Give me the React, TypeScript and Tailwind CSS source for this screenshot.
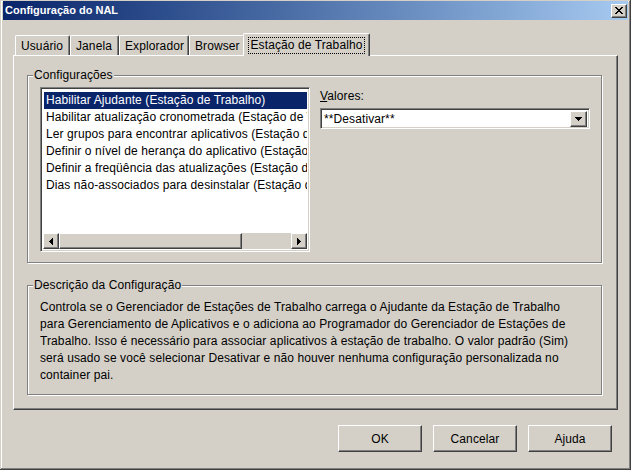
import React from 'react';

const raised =
  'border border-t-white border-l-white border-r-[#404040] border-b-[#404040] shadow-[inset_-1px_-1px_0_#808080]';
const sunken =
  'border border-t-[#808080] border-l-[#808080] border-r-white border-b-white shadow-[inset_1px_1px_0_#404040,inset_-1px_-1px_0_#d4d0c8]';
const etched = 'border border-[#808080] shadow-[inset_1px_1px_0_#fff,1px_1px_0_#fff]';

const items = [
  'Habilitar Ajudante (Estação de Trabalho)',
  'Habilitar atualização cronometrada (Estação de Trabalho)',
  'Ler grupos para encontrar aplicativos (Estação de Trabalho)',
  'Definir o nível de herança do aplicativo (Estação de Trabalho)',
  'Definir a freqüência das atualizações (Estação de Trabalho)',
  'Dias não-associados para desinstalar (Estação de Trabalho)',
];

function CloseGlyph() {
  // 8x7 pixel X, classic window style
  const px = [
    [0, 0], [1, 0], [6, 0], [7, 0],
    [1, 1], [2, 1], [5, 1], [6, 1],
    [2, 2], [3, 2], [4, 2], [5, 2],
    [3, 3], [4, 3],
    [2, 4], [3, 4], [4, 4], [5, 4],
    [1, 5], [2, 5], [5, 5], [6, 5],
    [0, 6], [1, 6], [6, 6], [7, 6],
  ];
  return (
    <svg width="8" height="7" viewBox="0 0 8 7" shapeRendering="crispEdges">
      {px.map(([x, y]) => (
        <rect key={`${x}-${y}`} x={x} y={y} width="1" height="1" fill="#000" />
      ))}
    </svg>
  );
}

function Arrow({ dir }: { dir: 'left' | 'right' | 'down' }) {
  if (dir === 'down')
    return (
      <svg width="7" height="4" viewBox="0 0 7 4" shapeRendering="crispEdges">
        <path d="M0 0h7v1H0zM1 1h5v1H1zM2 2h3v1H2zM3 3h1v1H3z" fill="#000" />
      </svg>
    );
  if (dir === 'left')
    return (
      <svg width="4" height="7" viewBox="0 0 4 7" shapeRendering="crispEdges">
        <path d="M3 0h1v7H3zM2 1h1v5H2zM1 2h1v3H1zM0 3h1v1H0z" fill="#000" />
      </svg>
    );
  return (
    <svg width="4" height="7" viewBox="0 0 4 7" shapeRendering="crispEdges">
      <path d="M0 0h1v7H0zM1 1h1v5H1zM2 2h1v3H2zM3 3h1v1H3z" fill="#000" />
    </svg>
  );
}

function Tab({ label, width, active }: { label: string; width: number; active?: boolean }) {
  if (active) {
    return (
      <div
        className="relative z-10 -mb-px -ml-[2px] flex h-[23px] items-center justify-center rounded-t-[2px] border-t border-l border-r border-t-white border-l-white border-r-[#404040] bg-[#d4d0c8] px-[3px] shadow-[inset_-1px_0_0_#808080]"
        style={{ width }}
      >
        <span className="border border-dotted border-black px-[2px] leading-[15px]">{label}</span>
      </div>
    );
  }
  return (
    <div
      className="flex h-[20px] items-center rounded-t-[2px] border-t border-l border-r border-t-white border-l-white border-r-[#404040] pl-[5px] shadow-[inset_-1px_0_0_#808080]"
      style={{ width }}
    >
      {label}
    </div>
  );
}

function Button({ label }: { label: string }) {
  return (
    <div className={`flex h-[27px] w-[84px] items-center justify-center ${raised}`}>{label}</div>
  );
}

export default function App() {
  return (
    <div className="flex h-[470px] w-[631px] flex-col overflow-hidden bg-[#d4d0c8] pt-[1px] font-['Liberation_Sans',Arial,sans-serif] text-[12px] tracking-[0.1px] text-black shadow-[inset_-1px_-1px_0_#404040,inset_1px_1px_0_#d4d0c8,inset_-2px_-2px_0_#808080,inset_2px_2px_0_#fff]">
      {/* barra de título */}
      <div className="mx-[3px] flex h-[19px] items-center justify-between bg-gradient-to-r from-[#0a246a] to-[#a6caf0] pl-[2px] pr-[1px]">
        <span className="text-[11px] font-bold tracking-normal text-white">Configuração do NAL</span>
        <div className={`flex h-[14px] w-[16px] items-center justify-center bg-[#d4d0c8] ${raised}`}>
          <CloseGlyph />
        </div>
      </div>

      {/* abas */}
      <div className="ml-[15px] mt-[13px] flex h-[22px] items-end">
        <Tab label="Usuário" width={55} />
        <Tab label="Janela" width={49} />
        <Tab label="Explorador" width={70} />
        <Tab label="Browser" width={56} />
        <Tab label="Estação de Trabalho" width={127} active />
      </div>

      {/* painel */}
      <div className="mx-[13px] h-[355px] border border-t-white border-l-white border-r-[#404040] border-b-[#404040] pl-[13px] pt-[19px] shadow-[inset_-1px_-1px_0_#808080]">
        <div className={`relative h-[188px] w-[575px] ${etched}`}>
          <span className="absolute -top-[8px] left-[5px] bg-[#d4d0c8] px-[1px] leading-[14px]">Configurações</span>
          <div className="ml-[12px] mt-[11px] flex">
            {/* lista */}
            <div className={`flex h-[165px] w-[270px] flex-col bg-white p-[2px] ${sunken}`}>
              <div className="flex-1 overflow-hidden pl-[1px] pt-[2px]">
                {items.map((it, i) => (
                  <div
                    key={it}
                    className={`h-[17px] overflow-hidden whitespace-nowrap pl-[2px] leading-[17px] ${
                      i === 0 ? 'bg-[#0a246a] text-white' : ''
                    }`}
                  >
                    {it}
                  </div>
                ))}
              </div>
              <div className="flex h-[16px] bg-[#d4d0c8]">
                <div className={`flex w-[16px] items-center justify-center ${raised}`}>
                  <Arrow dir="left" />
                </div>
                <div className={`w-[183px] ${raised}`} />
                <div className="flex-1" />
                <div className={`flex w-[16px] items-center justify-center ${raised}`}>
                  <Arrow dir="right" />
                </div>
              </div>
            </div>

            {/* valores */}
            <div className="ml-[10px] pt-[2px]">
              <div className="leading-[14px]">
                <span className="underline">V</span>alores:
              </div>
              <div className={`mt-[5px] flex h-[21px] w-[270px] items-center bg-white p-[2px] ${sunken}`}>
                <span className="flex-1 pl-[1px]">**Desativar**</span>
                <div className={`flex h-[16px] w-[17px] items-center justify-center bg-[#d4d0c8] ${raised}`}>
                  <Arrow dir="down" />
                </div>
              </div>
            </div>
          </div>
        </div>

        <div className={`relative mt-[22px] h-[110px] w-[575px] ${etched}`}>
          <span className="absolute -top-[8px] left-[5px] bg-[#d4d0c8] px-[1px] leading-[14px]">
            Descrição da Configuração
          </span>
          <p className="whitespace-nowrap pl-[12px] pt-[13px] leading-[17px]">
            Controla se o Gerenciador de Estações de Trabalho carrega o Ajudante da Estação de Trabalho
            <br />
            para Gerenciamento de Aplicativos e o adiciona ao Programador do Gerenciador de Estações de
            <br />
            Trabalho. Isso é necessário para associar aplicativos à estação de trabalho. O valor padrão (Sim)
            <br />
            será usado se você selecionar Desativar e não houver nenhuma configuração personalizada no
            <br />
            container pai.
          </p>
        </div>
      </div>

      {/* botões */}
      <div className="mr-[19px] mt-[15px] flex justify-end gap-[11px]">
        <Button label="OK" />
        <Button label="Cancelar" />
        <Button label="Ajuda" />
      </div>
    </div>
  );
}
